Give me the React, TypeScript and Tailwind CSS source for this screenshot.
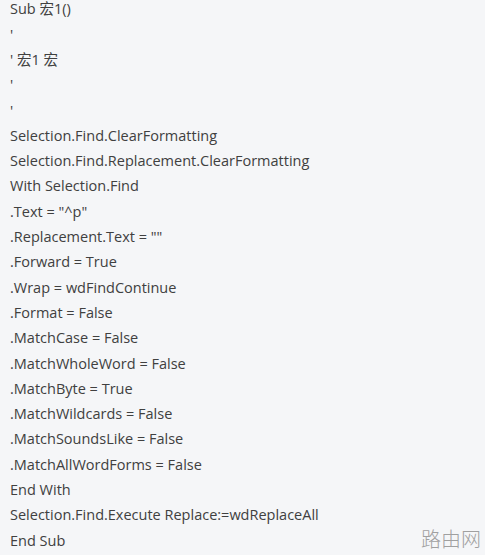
import React from "react";

const lines = [
  "Sub 宏1()",
  "'",
  "' 宏1 宏",
  "'",
  "'",
  "Selection.Find.ClearFormatting",
  "Selection.Find.Replacement.ClearFormatting",
  "With Selection.Find",
  '.Text = "^p"',
  '.Replacement.Text = ""',
  ".Forward = True",
  ".Wrap = wdFindContinue",
  ".Format = False",
  ".MatchCase = False",
  ".MatchWholeWord = False",
  ".MatchByte = True",
  ".MatchWildcards = False",
  ".MatchSoundsLike = False",
  ".MatchAllWordForms = False",
  "End With",
  "Selection.Find.Execute Replace:=wdReplaceAll",
  "End Sub",
];

export default function App() {
  return (
    <div className="relative w-[485px] h-[555px] overflow-hidden bg-[#f5f6f8]">
      <div className="flex flex-col pl-[10px] -mt-[3.6px] text-[14.5px] leading-[25.3px] text-[#404040] whitespace-pre font-['Open_Sans','Noto_Sans_CJK_SC',sans-serif]">
        {lines.map((l, i) => (
          <div key={i}>{l}</div>
        ))}
      </div>
      <div className="absolute right-[4px] bottom-[3px] h-[26px] text-[20px] leading-[26px] font-light text-[#a0a0a0] font-['Noto_Sans_CJK_SC',sans-serif]">
        路由网
      </div>
    </div>
  );
}
